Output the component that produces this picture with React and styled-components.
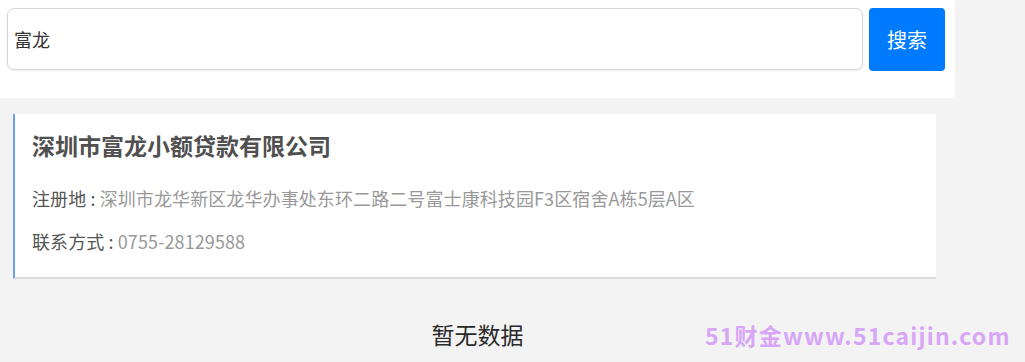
import React from 'react'
import styled, { createGlobalStyle } from 'styled-components'

const GlobalStyle = createGlobalStyle`
html, body {
  margin: 0;
  padding: 0;
  background: #f3f3f3;
  font-family: "Noto Sans CJK SC", "Noto Sans", sans-serif;
}
`

function App() {
    return (
        <Page>
            <GlobalStyle />
            <Main>
                <SearchBar>
                    <SearchInput defaultValue="富龙" />
                    <SearchButton>搜索</SearchButton>
                </SearchBar>

                <CompanyCard>
                    <CompanyName>深圳市富龙小额贷款有限公司</CompanyName>
                    <InfoRow first>
                        <Label>注册地 : </Label>
                        <Value>深圳市龙华新区龙华办事处东环二路二号富士康科技园F3区宿舍A栋5层A区</Value>
                    </InfoRow>
                    <InfoRow>
                        <Label>联系方式 : </Label>
                        <Value>0755-28129588</Value>
                    </InfoRow>
                </CompanyCard>

                <Empty>暂无数据</Empty>
            </Main>
            <Watermark>51财金www.51caijin.com</Watermark>
        </Page>
    )
}

const Page = styled.div`
position: relative;
width: 1025px;
height: 362px;
overflow: hidden;
background: #f3f3f3;
`
const Main = styled.div`
width: 955px;
`
const SearchBar = styled.div`
display: flex;
align-items: center;
gap: 6px;
height: 98px;
box-sizing: border-box;
padding: 0 10px 20px 7px;
background: #fff;
`
const SearchInput = styled.input`
flex: 1;
height: 62px;
box-sizing: border-box;
border: 1px solid #d6d6d6;
border-radius: 7px;
box-shadow: 0 1px 2px rgba(0,0,0,0.08);
padding: 0 6px;
font-family: "Noto Sans CJK SC", sans-serif;
font-size: 18px;
color: #333;
outline: none;
`
const SearchButton = styled.button`
width: 76px;
height: 63px;
border: none;
border-radius: 4px;
background: #007bff;
color: #fff;
font-family: "Noto Sans CJK SC", sans-serif;
font-size: 20px;
cursor: pointer;
`
const CompanyCard = styled.div`
margin: 16px 19px 0 13px;
height: 165px;
box-sizing: border-box;
padding: 13px 17px;
background: #fff;
border-left: 2px solid #6d9ff0;
border-bottom: 2px solid #dcdcdc;
`
const CompanyName = styled.div`
font-family: "Noto Sans CJK SC", serif;
font-size: 23px;
font-weight: 700;
color: #505050;
line-height: 36px;
`
const InfoRow = styled.div`
margin-top: ${props => props.first ? '18px' : '9px'};
font-size: 18px;
letter-spacing: 0.1px;
line-height: 34px;
`
const Label = styled.span`
color: #555;
`
const Value = styled.span`
color: #999;
`
const Empty = styled.div`
margin-top: 38px;
text-align: center;
font-size: 23px;
color: #2a2a2a;
`
const Watermark = styled.div`
position: absolute;
left: 705px;
top: 318px;
font-family: "Noto Sans CJK SC", sans-serif;
font-size: 23px;
font-weight: 700;
color: #d7a6f7;
letter-spacing: 1.2px;
`

export default App
